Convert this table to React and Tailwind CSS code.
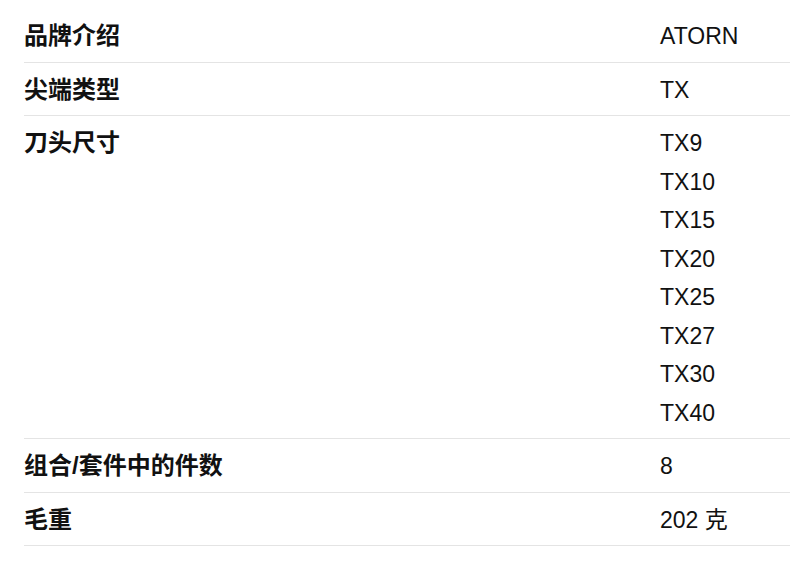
import React from "react";

const rows = [
  { label: "品牌介绍", values: ["ATORN"] },
  { label: "尖端类型", values: ["TX"] },
  { label: "刀头尺寸", values: ["TX9", "TX10", "TX15", "TX20", "TX25", "TX27", "TX30", "TX40"] },
  { label: "组合/套件中的件数", values: ["8"] },
  { label: "毛重", values: ["202 克"] },
];

const App = () => {
  return (
    <div
      className="bg-white min-h-screen pt-[9px] pl-6 text-[#111]"
      style={{ fontFamily: '"Liberation Sans", Arial, "Noto Sans CJK SC", sans-serif' }}
    >
      {rows.map((row) => (
        <div key={row.label} className="grid grid-cols-[636px_1fr] border-b border-[#e4e4e4] pt-[8px] pb-[6px]">
          <div className="text-[24px] leading-[38.5px] font-bold">{row.label}</div>
          <div className="text-[23px] leading-[38.5px]">
            {row.values.map((v) => (
              <div key={v}>{v}</div>
            ))}
          </div>
        </div>
      ))}
    </div>
  );
};

export default App;
